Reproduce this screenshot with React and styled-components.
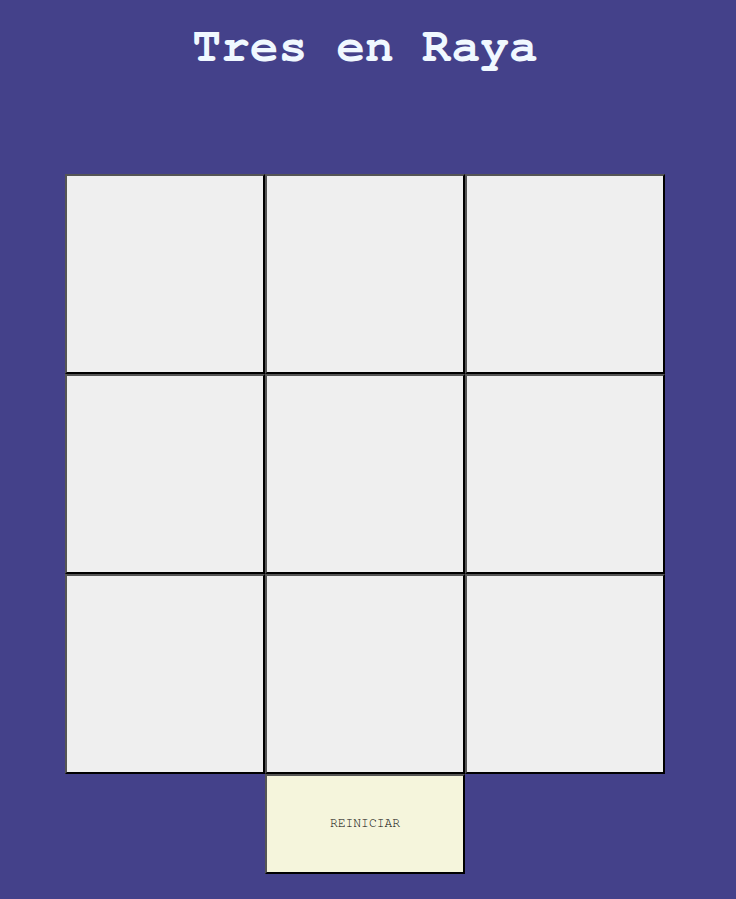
import React, { useState } from 'react';
import styled, { createGlobalStyle } from 'styled-components';

const GlobalStyle = createGlobalStyle`
    html, body {
        margin: 0;
        padding: 0;
        background: #44418a;
    }
`;

const Page = styled.div`
    padding: 20px 0 25px;
`;

const Title = styled.h1`
    margin: 0;
    padding-right: 6px;
    text-align: center;
    font-family: 'FreeMono', 'Courier New', monospace;
    font-weight: bold;
    font-size: 48px;
    line-height: 54px;
    color: #f0f8ff;
`;

const Board = styled.div`
    display: grid;
    grid-template-columns: repeat(3, 200px);
    grid-template-rows: repeat(3, 200px) 100px;
    margin: 100px 0 0 65px;
`;

// Casilla del tablero: borde tipo "outset"
const Cell = styled.button`
    box-sizing: border-box;
    width: 200px;
    height: 200px;
    margin: 0;
    padding: 0;
    background: #efefef;
    border: 2px solid;
    border-color: #555 #000 #000 #555;
    font-family: 'FreeMono', 'Courier New', monospace;
    font-size: 80px;
    color: #222;
    cursor: pointer;
`;

const ResetButton = styled(Cell)`
    grid-column: 2;
    height: 100px;
    padding-bottom: 2px;
    background: #f5f5dc;
    font-size: 13px;
    color: #000;
`;

const App = () => {
    const [cells, setCells] = useState(Array(9).fill(''));
    const [turn, setTurn] = useState('X');

    const play = (i) => {
        if (cells[i]) return;
        const next = cells.slice();
        next[i] = turn;
        setCells(next);
        setTurn(turn === 'X' ? 'O' : 'X');
    };

    const reset = () => {
        setCells(Array(9).fill(''));
        setTurn('X');
    };

    return (
        <Page>
            <GlobalStyle />
            <Title>Tres en Raya</Title>
            <Board>
                {cells.map((v, i) => (
                    <Cell key={i} onClick={() => play(i)}>{v}</Cell>
                ))}
                <ResetButton onClick={reset}>REINICIAR</ResetButton>
            </Board>
        </Page>
    );
};

export default App;
